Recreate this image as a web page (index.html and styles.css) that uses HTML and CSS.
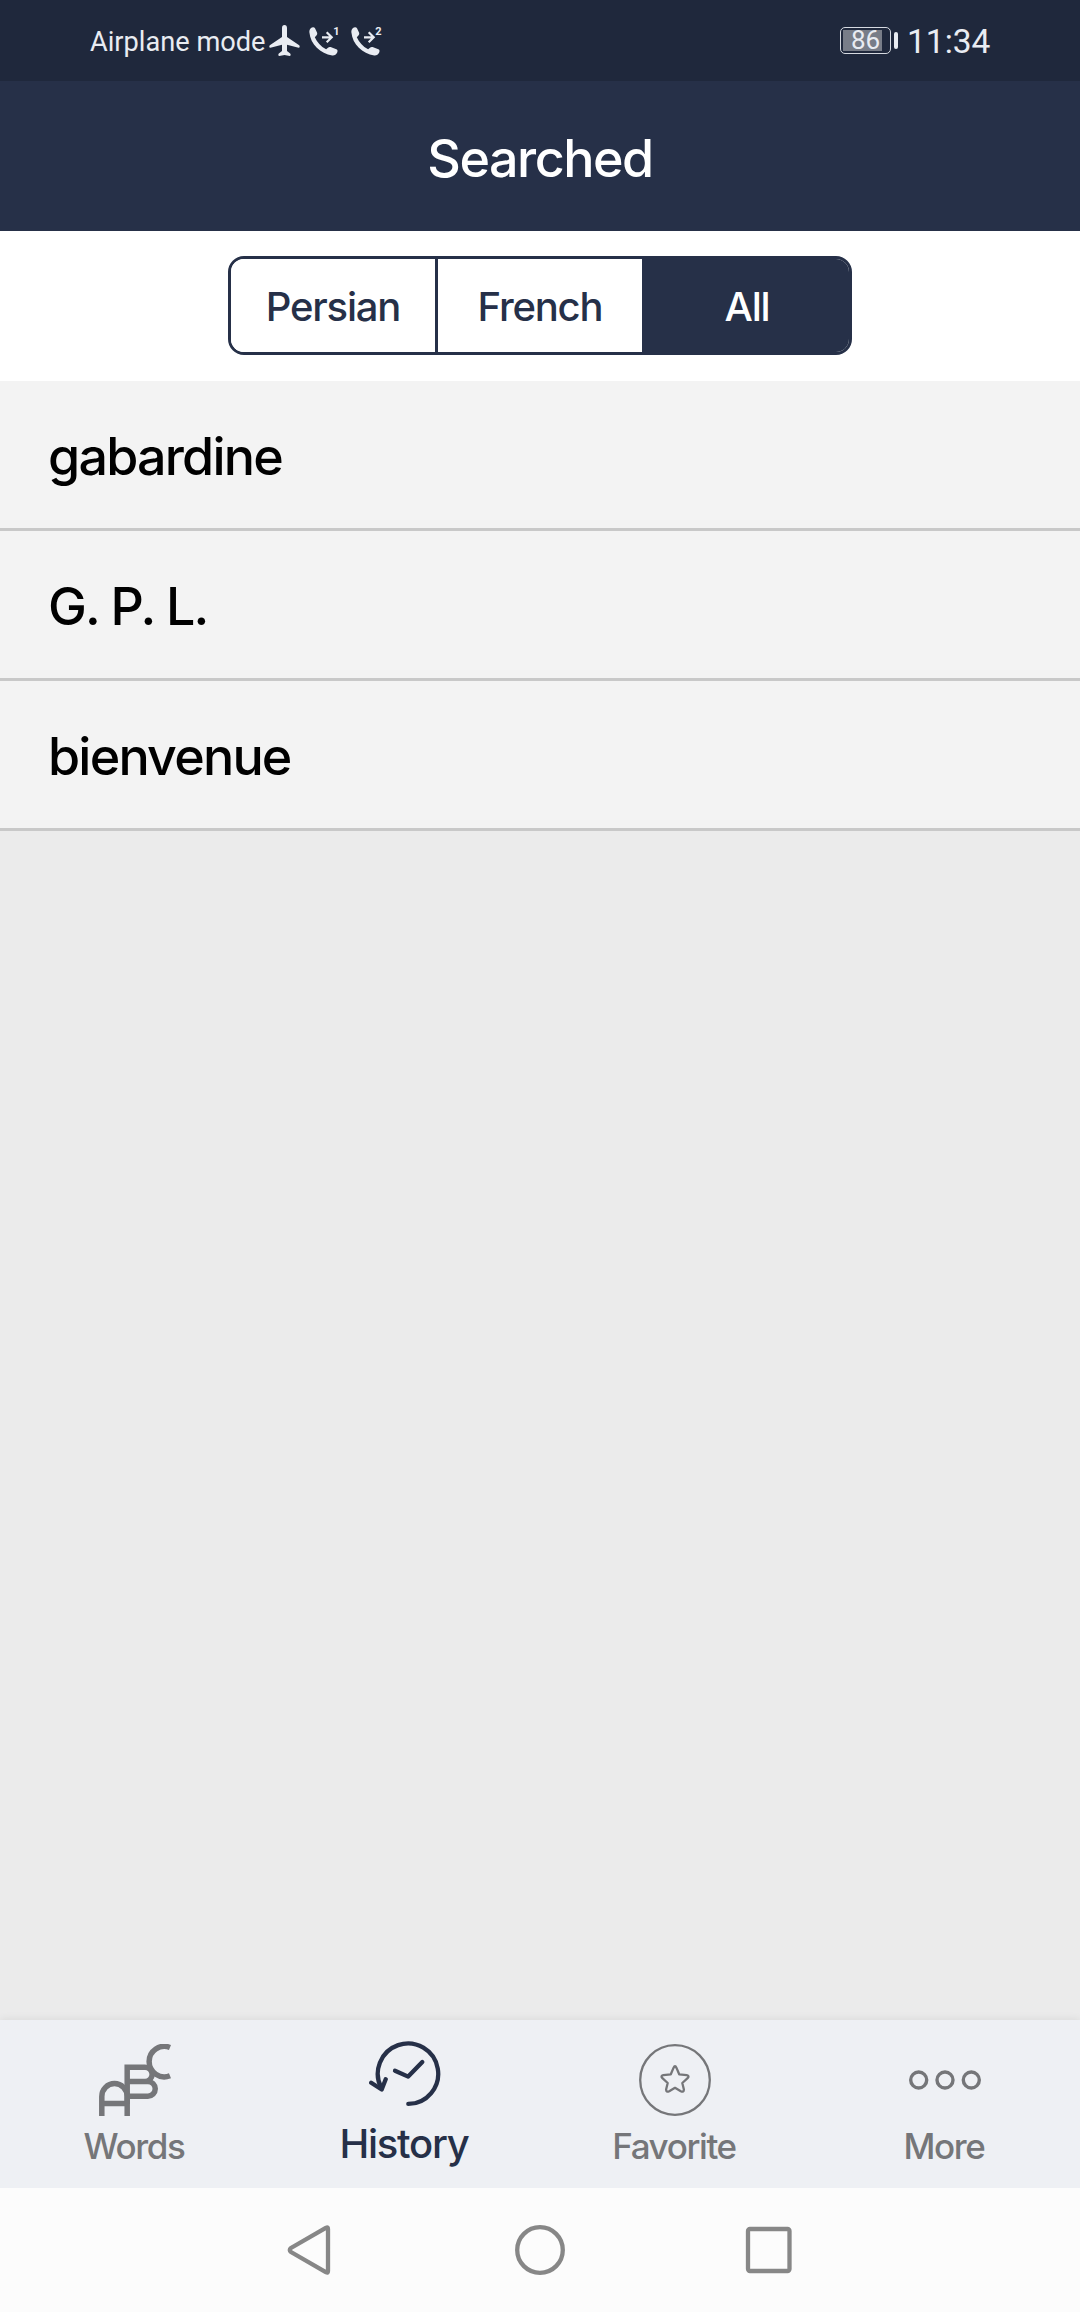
FILE: index.html
```html
<!DOCTYPE html>
<html lang="en">
<head>
<meta charset="UTF-8">
<meta name="viewport" content="width=device-width, initial-scale=1.0">
<title>Searched</title>
<link rel="stylesheet" href="styles.css">
</head>
<body>

  <div class="status-bar">
      <span class="status-text">Airplane mode</span>
      <svg class="icon-plane" width="31" height="31" viewBox="0 0 31 31">
          <path d="M15.5 0c-1.7 0-2.5 1.3-2.5 3v9L.8 20.2c-.8.6-.7 2.8.6 2.6l11.6-3V26l-3.2 2.4c-.8.7-.5 2.6.5 2.5l5.2-1 5.2 1c1 .1 1.3-1.8.5-2.5L18 26v-6.2l11.6 3c1.3.2 1.4-2 .6-2.6L18 12V3c0-1.7-.8-3-2.5-3z"/>
      </svg>
      <svg class="icon-call" width="31" height="30" viewBox="0 0 31 30">
          <path d="M1.5 1.4C3 .2 5.2-.1 6 1.3l2 4.2c.5 1.2.2 2.2-.8 3.2L5.8 10.3c2.2 5 6 9.2 11.3 12l1.9-1.6c1-.9 2-1 3.2-.5l5.2 2.1c1.3.6 1.4 1.9.8 3.1-1 2-2.8 3.3-5 3C11.5 26.8 1.5 17.5.4 5.5c-.1-1.5 0-3 1.1-4.1z"/>
          <path class="line" d="M13 10.3h9.5M17.7 5.3l5 5-5 5"/>
          <text x="24.2" y="8.3">1</text>
      </svg>
      <svg class="icon-call" width="31" height="30" viewBox="0 0 31 30">
          <path d="M1.5 1.4C3 .2 5.2-.1 6 1.3l2 4.2c.5 1.2.2 2.2-.8 3.2L5.8 10.3c2.2 5 6 9.2 11.3 12l1.9-1.6c1-.9 2-1 3.2-.5l5.2 2.1c1.3.6 1.4 1.9.8 3.1-1 2-2.8 3.3-5 3C11.5 26.8 1.5 17.5.4 5.5c-.1-1.5 0-3 1.1-4.1z"/>
          <path class="line" d="M13 10.3h9.5M17.7 5.3l5 5-5 5"/>
          <text x="24.2" y="8.3">2</text>
      </svg>
      <div class="battery">
          <div class="battery-level">86</div>
      </div>
      <div class="battery-tip"></div>
      <span class="clock">11:34</span>
  </div>

  <header class="header">
      <h1>Searched</h1>
  </header>

  <div class="filter">
      <div class="segments">
          <button class="segment">Persian</button>
          <button class="segment">French</button>
          <button class="segment active">All</button>
      </div>
  </div>

  <ul class="word-list">
      <li>gabardine</li>
      <li>G. P. L.</li>
      <li>bienvenue</li>
  </ul>

  <nav class="tab-bar">
      <a class="tab">
          <svg width="72" height="72" viewBox="0 0 72 72" stroke-width="5.5">
              <path d="M2.8 72V52.5a12.7 13 0 0 1 25.4 0V72M2.8 59.5h25.4"/>
              <path d="M28.2 60V23.2H46a7.1 7.1 0 0 1 0 14.3H28.2M46 37.5h2.9a7.3 7.3 0 0 1 0 14.7H28.2"/>
              <path d="M71 3.5A15.2 15.2 0 1 0 71 31.7"/>
          </svg>
          <span>Words</span>
      </a>
      <a class="tab active">
          <svg width="72" height="72" viewBox="0 0 72 72" stroke-width="4.3" stroke-linecap="round" stroke-linejoin="round">
              <path d="M39.3 65.9A30.2 30.2 0 1 0 12.4 50"/>
              <path d="M2.2 44.7l10.5 6.8 4-10.3"/>
              <path d="M26 32.7l13.2 5.9L53.3 24"/>
          </svg>
          <span>History</span>
      </a>
      <a class="tab">
          <svg width="72" height="72" viewBox="0 0 72 72" stroke-width="2.3" stroke-linejoin="round">
              <circle cx="36" cy="36" r="34.8"/>
              <path d="M34.5 23.9Q36 20.6 37.5 23.9L40.2 30.3L47.7 31.1Q50.8 31.9 48.6 34.2L43.3 39L44.9 45.5Q44.8 48.7 41.8 47.2L36 43.8L30.2 47.2Q27.2 48.7 27.1 45.5L28.7 39L23.4 34.2Q21.2 31.9 24.3 31.1L31.8 30.3Z"/>
          </svg>
          <span>Favorite</span>
      </a>
      <a class="tab">
          <svg width="72" height="72" viewBox="0 0 72 72" stroke-width="3.4">
              <circle cx="9.7" cy="36" r="8"/>
              <circle cx="36" cy="36" r="8"/>
              <circle cx="62.3" cy="36" r="8"/>
          </svg>
          <span>More</span>
      </a>
  </nav>

  <div class="system-nav">
      <svg width="50" height="50" viewBox="0 0 50 50">
          <path d="M40.2 2.7Q42 1.5 42 4V46Q42 48.500 40.2 47.3L5 27Q2.5 25 5 23Z"/>
      </svg>
      <svg width="50" height="50" viewBox="0 0 50 50">
          <circle cx="25" cy="25" r="22.8"/>
      </svg>
      <svg width="50" height="50" viewBox="0 0 50 50">
          <rect x="4" y="4" width="41.5" height="42" rx="2"/>
      </svg>
  </div>

</body>
</html>
```
FILE: styles.css
```css
* {
  box-sizing: border-box;
}

body {
  margin: 0;
  height: 2312px;
  display: flex;
  flex-direction: column;
  background: #ebebeb;
  font-family: Inter, "Liberation Sans", sans-serif;
  font-weight: 500;
}

/* status bar */
.status-bar {
  height: 81px;
  padding: 0 87px 0 90px;
  display: flex;
  align-items: center;
  background: #1f283c;
  color: #e9ecf2;
  font-family: Roboto, sans-serif;
  font-weight: 400;
}

.status-text {
  width: 179px;
  font-size: 27.2px;
  white-space: nowrap;
  padding-top: 2px;
}

.icon-plane {
  fill: #e9ecf2;
}

.icon-call {
  margin: 3px 2px 0 9px;
  fill: #e9ecf2;
  overflow: visible;
}

.icon-call + .icon-call {
  margin-left: 9px;
}

.icon-call .line {
  fill: none;
  stroke: #e9ecf2;
  stroke-width: 2.2;
}

.icon-call text {
  font-size: 11px;
  font-weight: 700;
}

.battery {
  width: 51px;
  height: 27px;
  margin-left: auto;
  padding: 2px;
  border: 1.5px solid #d5d9e0;
  border-radius: 5px;
}

.battery-level {
  width: 39px;
  height: 21px;
  padding-left: 8px;
  background: #787d88;
  font-size: 26px;
  line-height: 21px;
}

.battery-tip {
  width: 4px;
  height: 17px;
  margin: 0 9px 0 3px;
  border-radius: 2px;
  background: #e9ecf2;
}

.clock {
  width: 86px;
  padding-top: 1px;
  font-size: 33.5px;
}

/* header */
.header {
  height: 150px;
  padding-top: 4px;
  display: flex;
  align-items: center;
  justify-content: center;
  background: #263048;
  color: #fff;
}

.header h1 {
  margin: 0;
  font-size: 52px;
  font-weight: 500;
  letter-spacing: -1.5px;
}

/* language filter */
.filter {
  height: 150px;
  padding-bottom: 1px;
  display: flex;
  align-items: center;
  justify-content: center;
  background: #fff;
}

.segments {
  display: flex;
  width: 624px;
  height: 99px;
  border: 3px solid #263048;
  border-radius: 16px;
  overflow: hidden;
}

.segment {
  flex: 1;
  padding: 2px 0 0;
  border: none;
  border-left: 3px solid #263048;
  background: #fff;
  color: #263048;
  font: 500 40px Inter, sans-serif;
  letter-spacing: -1.2px;
}

.segment:first-child {
  border-left: none;
}

.segment.active {
  background: #263048;
  color: #fff;
}

/* searched words */
.word-list {
  flex: 1;
  margin: 0;
  padding: 0;
  list-style: none;
}

.word-list li {
  height: 150px;
  padding: 3px 48px 0;
  display: flex;
  align-items: center;
  background: #f3f3f3;
  border-bottom: 3px solid #c8c8c8;
  color: #000;
  font-size: 52px;
  letter-spacing: -1.8px;
}

/* bottom tabs */
.tab-bar {
  display: flex;
  height: 168px;
  background: #eef0f4;
  box-shadow: 0 -1px 8px rgba(0, 0, 0, 0.07);
}

.tab {
  flex: 1;
  padding-top: 24px;
  display: flex;
  flex-direction: column;
  align-items: center;
  color: #757679;
  font-size: 35px;
  line-height: 42px;
  letter-spacing: -1.4px;
}

.tab svg {
  fill: none;
  stroke: currentColor;
}

.tab span {
  margin-top: 9px;
  padding-right: 2px;
}

.tab.active {
  padding-top: 18px;
  color: #263048;
  font-size: 40px;
  letter-spacing: -1.3px;
}

.tab.active span {
  margin-top: 13px;
}

/* system buttons */
.system-nav {
  height: 124px;
  display: flex;
  align-items: center;
  justify-content: center;
  gap: 179px;
  background: #fcfcfc;
}

.system-nav svg {
  fill: none;
  stroke: #878787;
  stroke-width: 4.3;
}
```
